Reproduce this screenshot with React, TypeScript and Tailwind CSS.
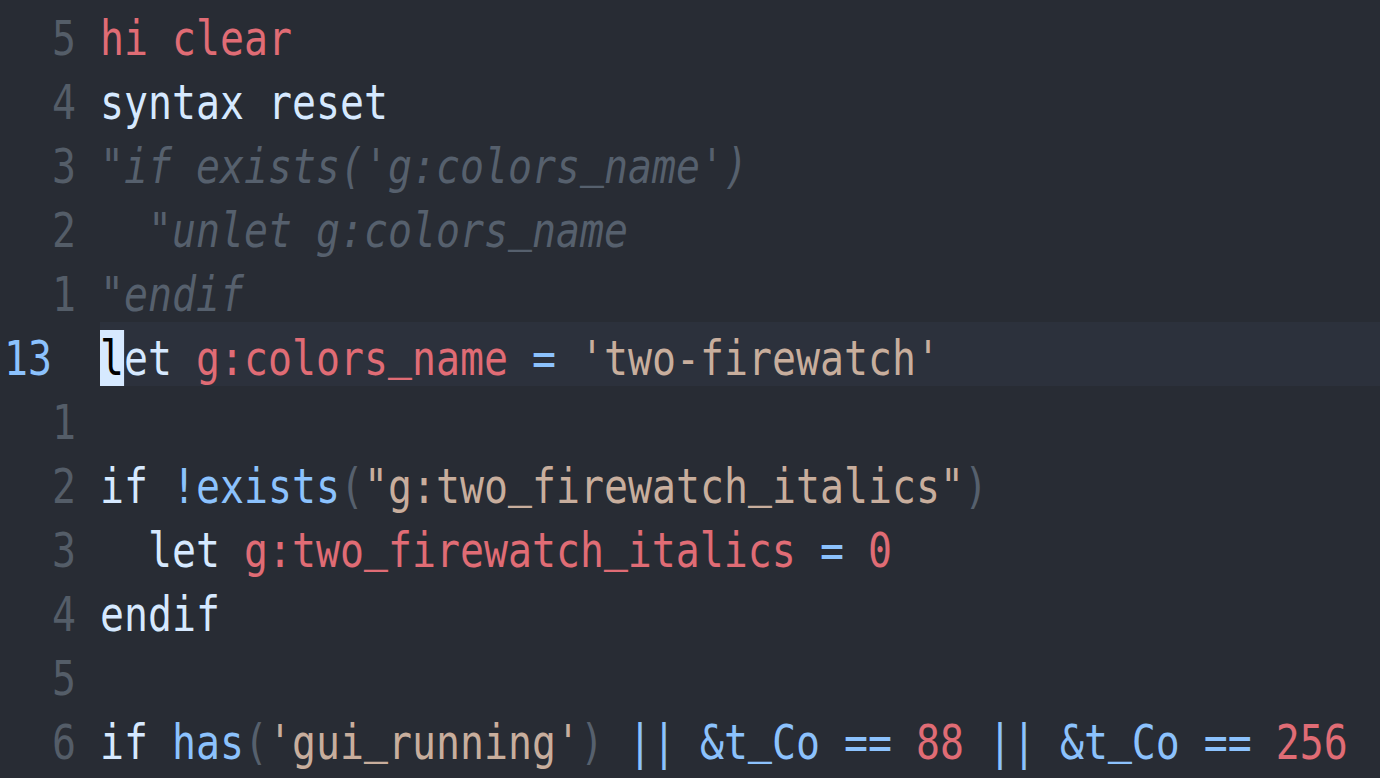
import React from "react";

type Seg = [string, string];

const FG = "text-[#d6e9ff]";
const RED = "text-[#e06c75]";
const STR = "text-[#c8ae9d]";
const BLUE = "text-[#8cc2fd]";
const GRAY = "text-[#56606d]";
const COMMENT = "text-[#56606d] italic";

const rows: { num: string; current?: boolean; segs: Seg[] }[] = [
  { num: "  5", segs: [["hi clear", RED]] },
  { num: "  4", segs: [["syntax reset", FG]] },
  { num: "  3", segs: [["\"if exists('g:colors_name')", COMMENT]] },
  { num: "  2", segs: [["  \"unlet g:colors_name", COMMENT]] },
  { num: "  1", segs: [["\"endif", COMMENT]] },
  {
    num: "13 ",
    current: true,
    segs: [
      ["et ", FG],
      ["g:colors_name", RED],
      [" ", FG],
      ["=", BLUE],
      [" ", FG],
      ["'two-firewatch'", STR],
    ],
  },
  { num: "  1", segs: [] },
  {
    num: "  2",
    segs: [
      ["if ", FG],
      ["!exists", BLUE],
      ["(", GRAY],
      ["\"g:two_firewatch_italics\"", STR],
      [")", GRAY],
    ],
  },
  {
    num: "  3",
    segs: [
      ["  let ", FG],
      ["g:two_firewatch_italics", RED],
      [" ", FG],
      ["=", BLUE],
      [" ", FG],
      ["0", RED],
    ],
  },
  { num: "  4", segs: [["endif", FG]] },
  { num: "  5", segs: [] },
  {
    num: "  6",
    segs: [
      ["if ", FG],
      ["has", BLUE],
      ["(", GRAY],
      ["'gui_running'", STR],
      [")", GRAY],
      [" ", FG],
      ["||", BLUE],
      [" ", FG],
      ["&t_Co", BLUE],
      [" ", FG],
      ["==", BLUE],
      [" ", FG],
      ["88", RED],
      [" ", FG],
      ["||", BLUE],
      [" ", FG],
      ["&t_Co", BLUE],
      [" ", FG],
      ["==", BLUE],
      [" ", FG],
      ["256", RED],
    ],
  },
];

const textCls =
  "inline-block whitespace-pre origin-top-left scale-x-[0.8305] leading-[72px] pb-[16px] text-[48px]";

function renderText(t: string) {
  const parts = t.split("_");
  const out: React.ReactNode[] = [];
  parts.forEach((p, i) => {
    if (i > 0)
      out.push(
        <span key={"u" + i} className="font-['Liberation_Mono'] not-italic">
          _
        </span>
      );
    if (p) out.push(<React.Fragment key={"t" + i}>{p}</React.Fragment>);
  });
  return out;
}

export default function App() {
  return (
    <div
      className="w-[1380px] h-[778px] overflow-hidden bg-[#282c34] pt-[2px]"
      style={{ fontFamily: '"DejaVu Sans Mono", "Liberation Mono", monospace' }}
    >
      {rows.map((r, i) => (
        <div key={i} className="flex h-[64px] items-start">
          <div className="w-[100px] shrink-0 pl-[4px] h-[64px]">
            <span
              className={`${textCls} ${
                r.current ? "text-[#8cc2fd]" : "text-[#545d68]"
              }`}
            >
              {r.num}
            </span>
          </div>
          <div
            className={`flex-1 h-[64px] ${r.current ? "bg-[#2c313c]" : ""}`}
          >
            <span className={textCls}>
              {r.current && (
                <span className="bg-[#d6e9ff] text-[#000000]">l</span>
              )}
              {r.segs.map((s, j) => (
                <span key={j} className={s[1]}>
                  {renderText(s[0])}
                </span>
              ))}
            </span>
          </div>
        </div>
      ))}
    </div>
  );
}
